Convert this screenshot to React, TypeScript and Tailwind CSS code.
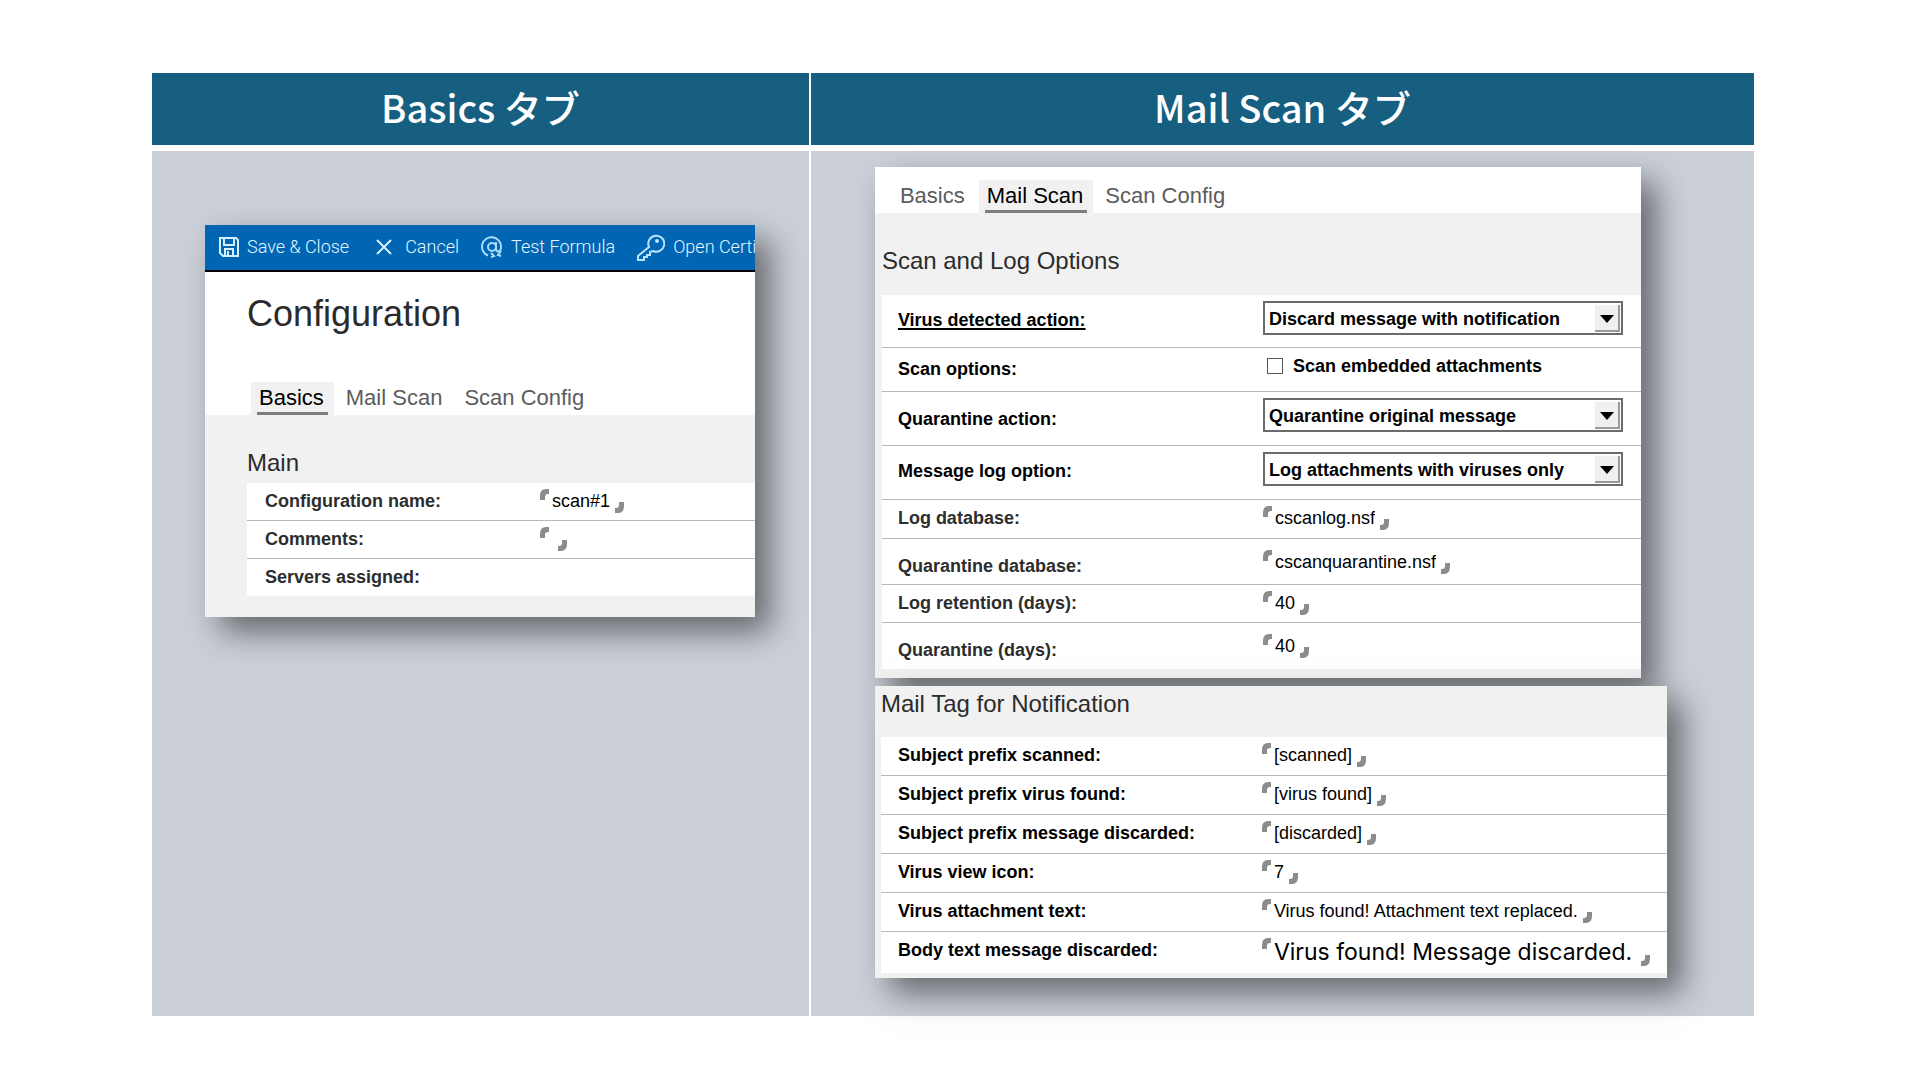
import { useState } from "react";
import type { ReactNode } from "react";
import clsx from "clsx";

type Row = {
  id: string;
  label: string;
  control?: ReactNode;
  height: string;
  labelPad?: string;
  controlPad?: string;
  labelClass?: string;
};

const SaveIcon = () => (
  <svg width="20" height="20" viewBox="0 0 20 20" fill="none" stroke="#d5f0ff" strokeWidth="2">
    <path d="M1 1h16l2 2v16H4l-3-3z" />
    <path d="M5 1v7h10V1M6 19v-7h8v7M9 14v4" />
  </svg>
);

const CancelIcon = () => (
  <svg width="26" height="18" viewBox="0 0 26 18" fill="none" stroke="#d5f0ff" strokeWidth="2">
    <path d="M6 2l14 14M20 2L6 16" />
  </svg>
);

const FormulaIcon = () => (
  <svg width="22" height="22" viewBox="0 0 22 22" fill="none" stroke="#a9dcfb" strokeWidth="2">
    <path d="M7 19.500A9.500 9.500 0 1 1 20 11c0 3-1 4.500-3 4.500S15 14 15 12V6" />
    <circle cx="11" cy="11" r="4" />
    <path d="M10 17l3 3-3 1M20 15l-3 4 3 1" />
  </svg>
);

const KeyIcon = () => (
  <svg width="28" height="28" viewBox="0 0 28 28" fill="none" stroke="#b9e4fd" strokeWidth="2">
    <path d="M12 14a8 8 0 1 1 4 4l-3 1v3h-3v2H7v3H1v-4z" />
    <circle cx="20" cy="8" r="1" />
  </svg>
);

const FieldStart = () => (
  <svg className="shrink-0 self-start" width="9" height="11" viewBox="0 0 9 11" fill="#8c8c8c">
    <path d="M0 11V7Q0 0 6 0h3v5H8Q5 5 5 8v3z" />
  </svg>
);

const FieldEnd = () => (
  <svg className="shrink-0 self-end" width="9" height="11" viewBox="0 0 9 11" fill="#8c8c8c">
    <path d="M9 0v4q0 7-6 7H0V6h1q3 0 3-3V0z" />
  </svg>
);

const TextField = ({ id, value, large }: { id: string; value: string; large?: boolean }) => (
  <span className="flex w-fit gap-[3px]">
    <FieldStart />
    <input
      id={id}
      type="text"
      defaultValue={value}
      className={clsx(
        "field-sizing-content bg-transparent text-black outline-none",
        large
          ? "pr-1.5 font-[Inter,sans-serif] text-[23px] leading-7"
          : "pr-0.5 text-lg leading-6"
      )}
    />
    <FieldEnd />
  </span>
);

const SelectField = ({ id, value }: { id: string; value: string }) => (
  <span className="relative block h-[34px] max-w-[360px] border-2 border-[#6b6b6b]">
    <select
      id={id}
      defaultValue={value}
      className="block h-full w-full appearance-none bg-white pl-1 pt-0.5 text-lg font-bold leading-6 text-black outline-none"
    >
      <option>{value}</option>
    </select>
    <span className="pointer-events-none absolute right-px top-0.5 flex h-[27px] w-[25px] items-center justify-center border-b-2 border-r-2 border-[#9a9a9a] bg-[#f0f0f0] pl-0.5 pt-0.5">
      <svg width="14" height="8" viewBox="0 0 14 8">
        <path d="M0 0h14L7 8z" />
      </svg>
    </span>
  </span>
);

const ScanOption = () => {
  const [checked, setChecked] = useState(false);
  return (
    <label className="flex items-center gap-2.5 pl-1 text-lg font-bold leading-6 text-black">
      <input
        id="scan-options"
        type="checkbox"
        checked={checked}
        onChange={(e) => setChecked(e.target.checked)}
        className="size-4 appearance-none border border-[#555] bg-white checked:bg-[#555]"
      />
      Scan embedded attachments
    </label>
  );
};

const basicsRows: Row[] = [
  {
    id: "config-name",
    label: "Configuration name:",
    height: "h-[38px]",
    control: <TextField id="config-name" value="scan#1" />,
  },
  {
    id: "comments",
    label: "Comments:",
    height: "h-[38px]",
    control: <TextField id="comments" value="" />,
  },
  { id: "servers", label: "Servers assigned:", height: "h-[37px]" },
];

const scanRows: Row[] = [
  {
    id: "virus-action",
    label: "Virus detected action:",
    height: "h-[53px]",
    labelPad: "pt-[13px]",
    labelClass: "text-black underline decoration-2 underline-offset-2",
    control: <SelectField id="virus-action" value="Discard message with notification" />,
  },
  {
    id: "scan-options",
    label: "Scan options:",
    height: "h-11",
    labelPad: "pt-[9px]",
    labelClass: "text-black",
    control: <ScanOption />,
  },
  {
    id: "quarantine-action",
    label: "Quarantine action:",
    height: "h-[54px]",
    labelPad: "pt-[15px]",
    labelClass: "text-black",
    control: <SelectField id="quarantine-action" value="Quarantine original message" />,
  },
  {
    id: "message-log",
    label: "Message log option:",
    height: "h-[54px]",
    labelPad: "pt-[13px]",
    labelClass: "text-black",
    control: <SelectField id="message-log" value="Log attachments with viruses only" />,
  },
  {
    id: "log-db",
    label: "Log database:",
    height: "h-[39px]",
    control: <TextField id="log-db" value="cscanlog.nsf" />,
  },
  {
    id: "quarantine-db",
    label: "Quarantine database:",
    height: "h-[46px]",
    labelPad: "pt-[15px]",
    controlPad: "pt-[11px]",
    control: <TextField id="quarantine-db" value="cscanquarantine.nsf" />,
  },
  {
    id: "log-retention",
    label: "Log retention (days):",
    height: "h-[38px]",
    control: <TextField id="log-retention" value="40" />,
  },
  {
    id: "quarantine-days",
    label: "Quarantine (days):",
    height: "h-[46px]",
    labelPad: "pt-[15px]",
    controlPad: "pt-[11px]",
    control: <TextField id="quarantine-days" value="40" />,
  },
];

const mailTags = [
  ["Subject prefix scanned:", "[scanned]"],
  ["Subject prefix virus found:", "[virus found]"],
  ["Subject prefix message discarded:", "[discarded]"],
  ["Virus view icon:", "7"],
  ["Virus attachment text:", "Virus found! Attachment text replaced."],
  ["Body text message discarded:", "Virus found! Message discarded."],
];

const tagRows: Row[] = mailTags.map(([label, value], i) => {
  const last = i === mailTags.length - 1;
  return {
    id: `tag-${i}`,
    label,
    height: last ? "h-[41px]" : "h-[39px]",
    labelClass: "text-black",
    control: <TextField id={`tag-${i}`} value={value} large={last} />,
  };
});

const FormRows = ({
  rows,
  indent,
  labelWidth,
}: {
  rows: Row[];
  indent: string;
  labelWidth: string;
}) => (
  <div className="bg-white text-lg leading-6">
    {rows.map((row) => (
      <div
        key={row.id}
        className={clsx("flex border-b border-[#b8b8b8] last:border-b-0", indent, row.height)}
      >
        <div className={clsx("shrink-0", labelWidth, row.labelPad ?? "pt-1.5")}>
          {row.control ? (
            <label
              htmlFor={row.id}
              className={clsx("font-bold", row.labelClass ?? "text-[#2d2d2d]")}
            >
              {row.label}
            </label>
          ) : (
            <span className="font-bold text-[#2d2d2d]">{row.label}</span>
          )}
        </div>
        <div className={clsx("grow", row.controlPad ?? "pt-1.5")}>{row.control}</div>
      </div>
    ))}
  </div>
);

const TabBar = ({ active }: { active: string }) => (
  <nav className="flex gap-1">
    {["Basics", "Mail Scan", "Scan Config"].map((tab) => (
      <button
        key={tab}
        type="button"
        className={clsx(
          "h-[33px] px-1.5 text-[22px] leading-7",
          tab === active ? "bg-[#f1f1f1] text-black" : "text-[#5c5c5c]"
        )}
      >
        <span
          className={clsx(
            "block h-full border-b-[3px] pl-0.5 pr-1 pt-0.5",
            tab === active ? "border-[#7d7d7d]" : "border-transparent"
          )}
        >
          {tab}
        </span>
      </button>
    ))}
  </nav>
);

const toolbarItems = [
  { label: "Save & Close", icon: <SaveIcon /> },
  { label: "Cancel", icon: <CancelIcon /> },
  { label: "Test Formula", icon: <FormulaIcon /> },
  { label: "Open Certifier", icon: <KeyIcon /> },
];

const cardShadow = "shadow-[15px_15px_30px_rgba(0,0,0,0.5)]";

const BasicsCard = () => (
  <section className={clsx("max-w-[550px] overflow-hidden bg-[#f1f1f1]", cardShadow)}>
    <div className="flex h-[47px] items-center gap-[22px] border-b-2 border-black bg-[#0065b3] pb-0.5 pl-3.5">
      {toolbarItems.map((item) => (
        <button
          key={item.label}
          type="button"
          className="flex shrink-0 items-center gap-2 whitespace-nowrap font-[Roboto,sans-serif] text-lg font-light leading-6 text-[#e2f6ff]"
        >
          {item.icon}
          {item.label}
        </button>
      ))}
    </div>
    <div className="bg-white pl-[42px]">
      <h1 className="pt-[22px] text-4xl text-[#2b2b2b]">Configuration</h1>
      <div className="pt-12 pl-1">
        <TabBar active="Basics" />
      </div>
    </div>
    <div className="pb-[21px] pl-[42px] pt-[34px]">
      <h2 className="pb-1.5 text-2xl leading-7 text-[#2b2b2b]">Main</h2>
      <FormRows rows={basicsRows} indent="pl-[18px]" labelWidth="w-[275px]" />
    </div>
  </section>
);

const MailScanCard = () => (
  <section className={clsx("max-w-[766px] bg-[#f1f1f1]", cardShadow)}>
    <div className="bg-white pl-[17px] pt-[13px]">
      <TabBar active="Mail Scan" />
    </div>
    <div className="pb-[9px] pl-[7px] pt-[34px]">
      <h2 className="pb-5 text-2xl leading-7 text-[#2b2b2b]">Scan and Log Options</h2>
      <FormRows rows={scanRows} indent="pl-4" labelWidth="w-[365px]" />
    </div>
  </section>
);

const MailTagCard = () => (
  <section className={clsx("mt-2 max-w-[792px] bg-[#f1f1f1] pb-[5px] pl-[6px] pt-1", cardShadow)}>
    <h2 className="pb-[19px] text-2xl leading-7 text-[#2b2b2b]">Mail Tag for Notification</h2>
    <FormRows rows={tagRows} indent="pl-[17px]" labelWidth="w-[364px]" />
  </section>
);

const App = () => (
  <main className="min-h-screen bg-white pb-16 pl-[152px] pr-[166px] pt-[73px] font-['Liberation_Sans',Arial,sans-serif]">
    <table className="w-full table-fixed border-separate border-spacing-0">
      <thead>
        <tr className="h-[72px] bg-[#165f81] font-['Noto_Sans_CJK_JP',sans-serif] text-[38px] leading-[60px] text-white">
          <th className="w-[41.13%] border-r-2 border-white pb-1 font-medium">Basics タブ</th>
          <th className="pb-1 font-medium">Mail Scan タブ</th>
        </tr>
      </thead>
      <tbody>
        <tr className="bg-[#cbd0d8] align-top">
          <td className="border-r-2 border-t-6 border-white pl-[53px] pr-11 pt-[74px]">
            <BasicsCard />
          </td>
          <td className="border-t-6 border-white pb-[38px] pl-16 pr-20 pt-4">
            <MailScanCard />
            <MailTagCard />
          </td>
        </tr>
      </tbody>
    </table>
  </main>
);

export default App;
